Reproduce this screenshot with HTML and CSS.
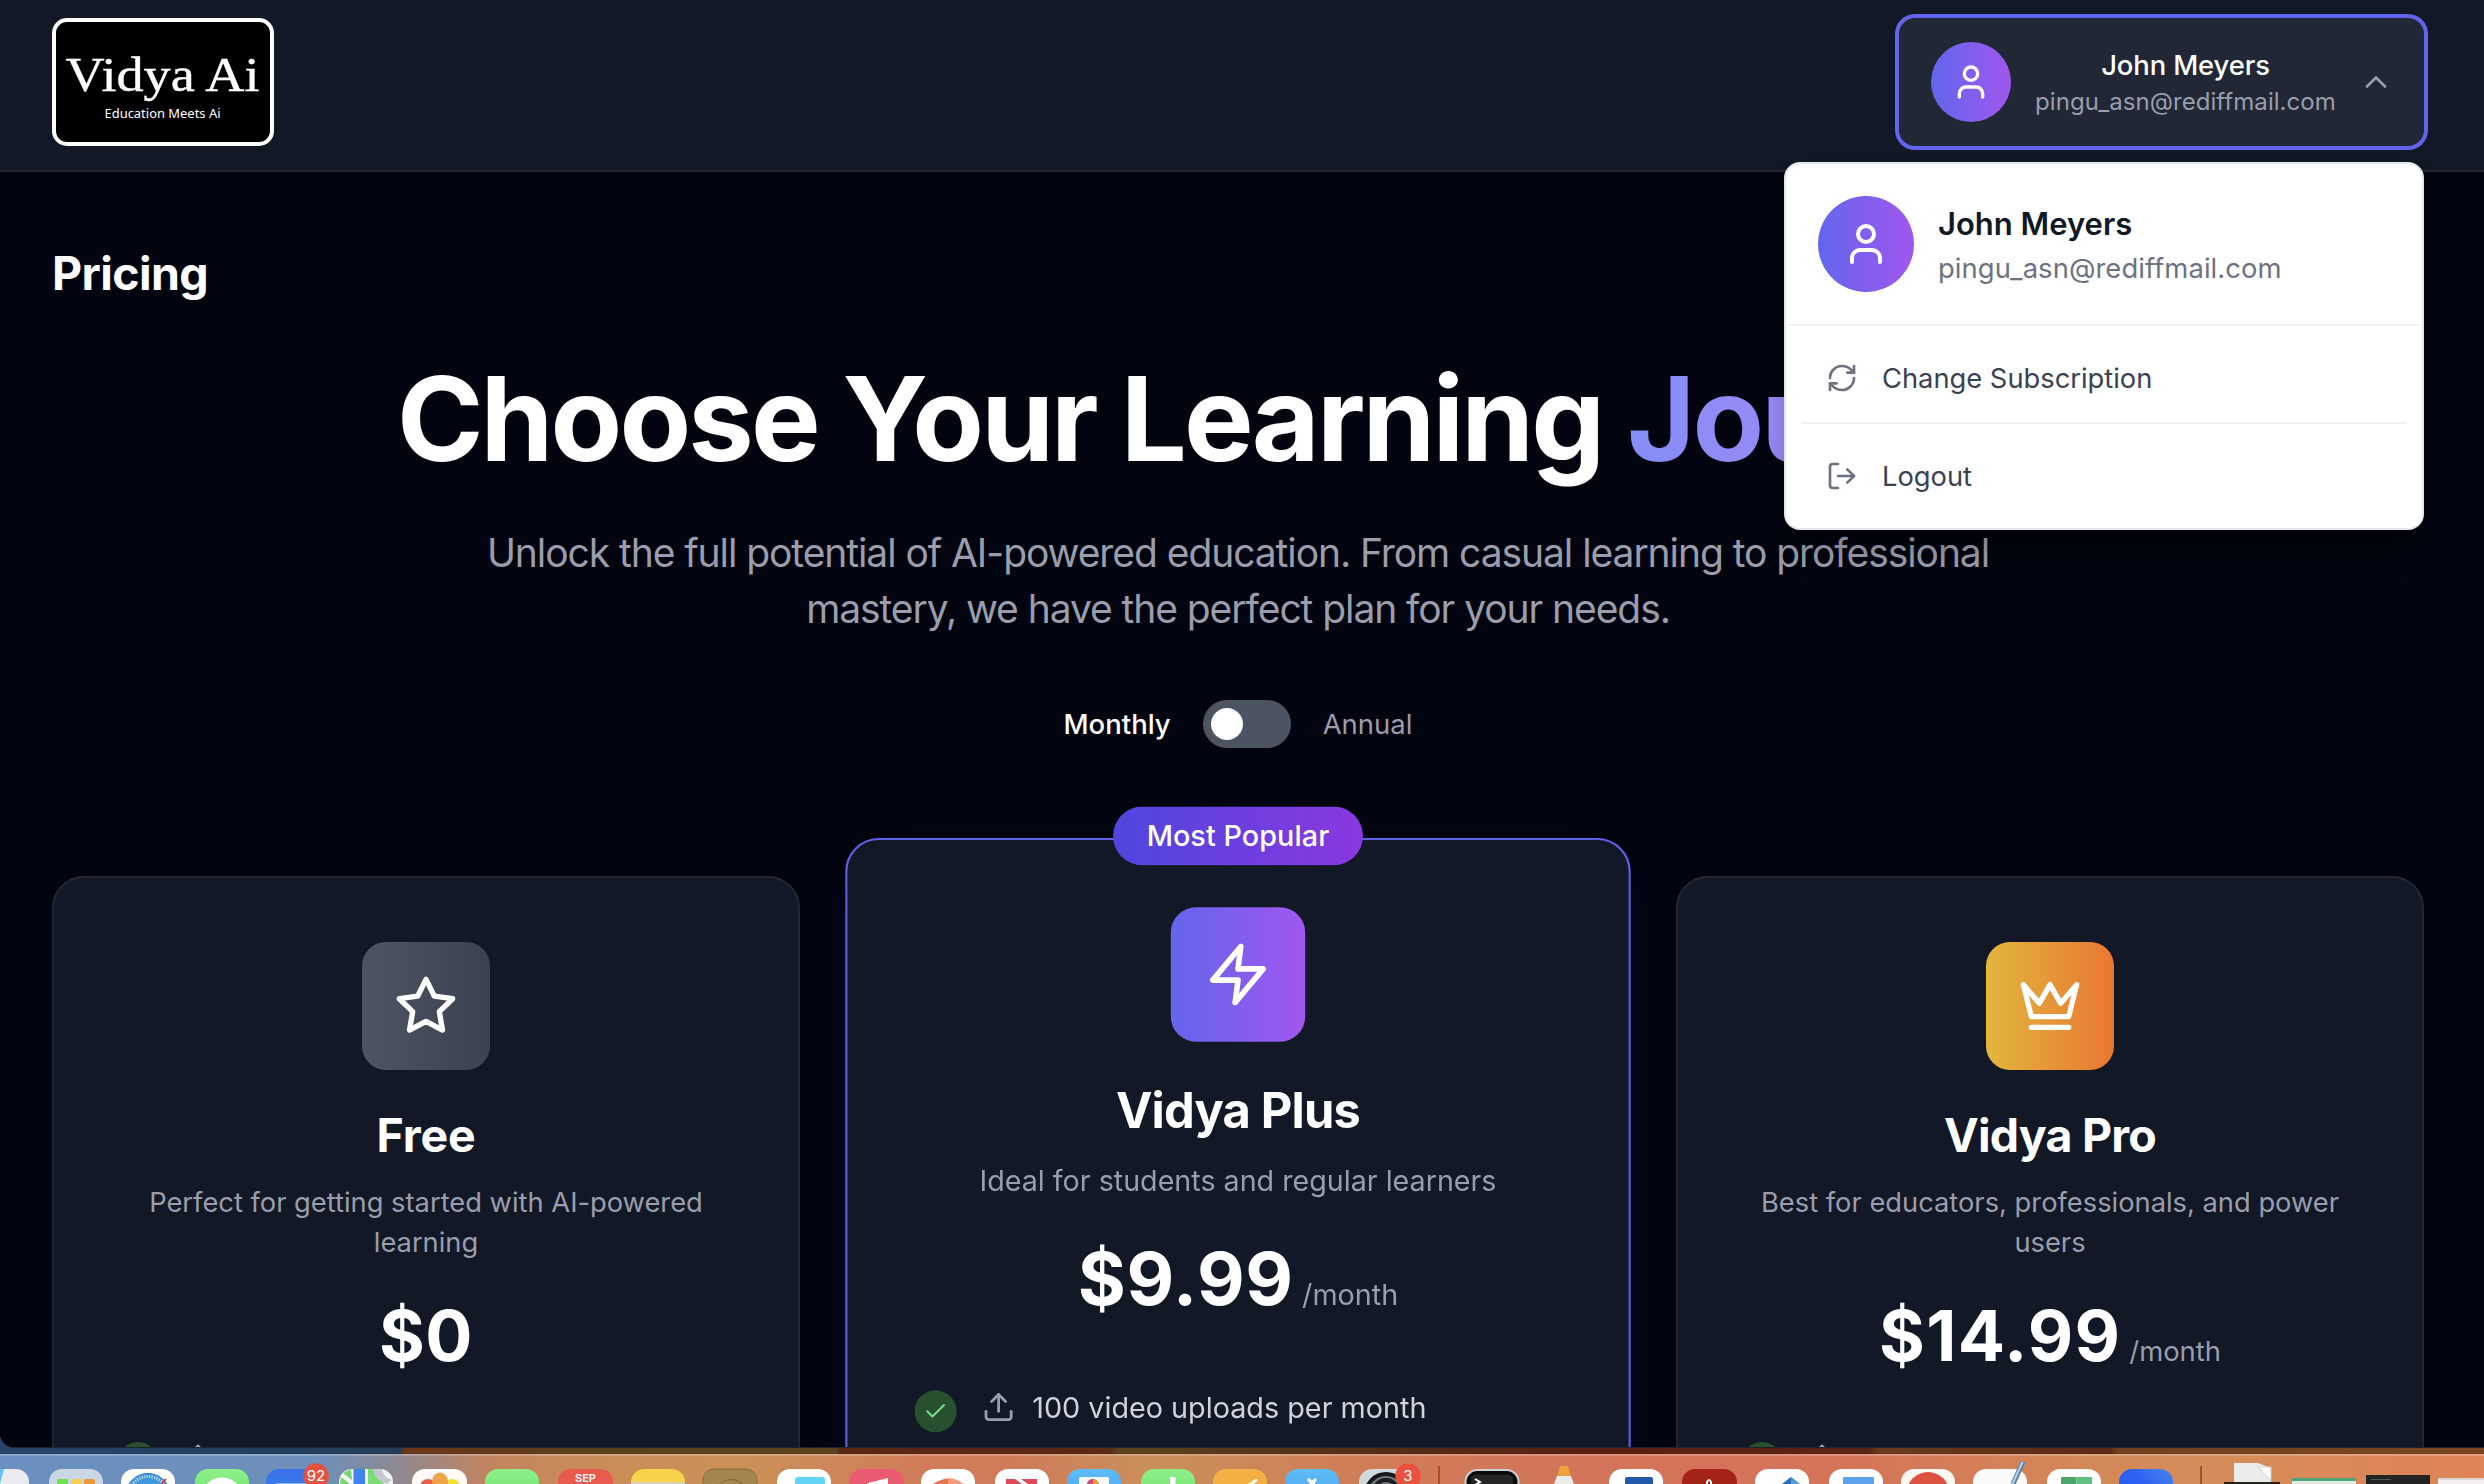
FILE: index.html
```
<!DOCTYPE html>
<html lang="en">
<head>
<meta charset="utf-8">
<title>Vidya Ai – Pricing</title>
<link rel="stylesheet" href="styles.css">
</head>
<body>
<div class="screen">
  <div class="window">
    <header class="topbar">
      <svg class="logo" viewBox="0 0 222 128" role="img" aria-label="Vidya Ai">
        <rect x="2" y="2" width="218" height="124" rx="13" fill="#000" stroke="#fff" stroke-width="4"/>
        <text class="logo-name" x="13.5" y="73" textLength="194" lengthAdjust="spacingAndGlyphs">Vidya Ai</text>
        <text class="logo-tag" x="52.5" y="99.5" textLength="116" lengthAdjust="spacingAndGlyphs">Education Meets Ai</text>
      </svg>
      <div class="account">
        <button class="user-button">
          <span class="avatar"><svg class="icon i40" viewBox="0 0 24 24"><path d="M19 21v-2a4 4 0 0 0-4-4H9a4 4 0 0 0-4 4v2"/><circle cx="12" cy="7" r="4"/></svg></span>
          <span class="user-text">
            <span class="user-name">John Meyers</span>
            <span class="user-mail">pingu_asn@rediffmail.com</span>
          </span>
          <svg class="icon chevron" viewBox="0 0 24 24"><path d="m18 15-6-6-6 6"/></svg>
        </button>
        <div class="menu">
          <div class="menu-profile">
            <span class="avatar avatar-lg"><svg class="icon i48" viewBox="0 0 24 24"><path d="M19 21v-2a4 4 0 0 0-4-4H9a4 4 0 0 0-4 4v2"/><circle cx="12" cy="7" r="4"/></svg></span>
            <div>
              <div class="menu-name">John Meyers</div>
              <div class="menu-mail">pingu_asn@rediffmail.com</div>
            </div>
          </div>
          <div class="menu-items">
            <div class="menu-item">
              <svg class="icon i32" viewBox="0 0 24 24"><path d="M3 12a9 9 0 0 1 9-9 9.75 9.75 0 0 1 6.74 2.74L21 8"/><path d="M21 3v5h-5"/><path d="M21 12a9 9 0 0 1-9 9 9.75 9.75 0 0 1-6.74-2.74L3 16"/><path d="M8 16H3v5"/></svg>
              <span>Change Subscription</span>
            </div>
            <div class="menu-rule"></div>
            <div class="menu-item">
              <svg class="icon i32" viewBox="0 0 24 24"><path d="M9 21H5a2 2 0 0 1-2-2V5a2 2 0 0 1 2-2h4"/><path d="m16 17 5-5-5-5"/><path d="M21 12H9"/></svg>
              <span>Logout</span>
            </div>
          </div>
        </div>
      </div>
    </header>

    <main class="page">
      <h2 class="page-title">Pricing</h2>
      <section class="hero">
        <h1 class="headline">Choose Your Learning <span class="headline-accent">Journey</span></h1>
        <p class="lead">Unlock the full potential of AI-powered education. From casual learning to professional<br>mastery, we have the perfect plan for your needs.</p>
        <div class="billing">
          <span class="billing-on">Monthly</span>
          <span class="switch"><span class="knob"></span></span>
          <span class="billing-off">Annual</span>
        </div>
      </section>

      <section class="plans">
        <article class="plan">
          <div class="plan-icon grey"><svg class="icon i64" viewBox="0 0 24 24"><polygon points="12 2 15.09 8.26 22 9.27 17 14.14 18.18 21.02 12 17.77 5.82 21.02 7 14.14 2 9.27 8.91 8.26 12 2"/></svg></div>
          <h3 class="plan-name plan-name-free">Free</h3>
          <p class="plan-desc">Perfect for getting started with AI-powered<br>learning</p>
          <div class="price"><span class="amount">$0</span></div>
          <div class="feature">
            <span class="check"><svg class="icon i24" viewBox="0 0 24 24"><path d="M20 6 9 17l-5-5"/></svg></span>
            <svg class="icon i32 upload" viewBox="0 0 24 24"><path d="M21 15v4a2 2 0 0 1-2 2H5a2 2 0 0 1-2-2v-4"/><path d="m17 8-5-5-5 5"/><path d="M12 3v12"/></svg>
            <span>10 video uploads per month</span>
          </div>
        </article>

        <article class="plan popular">
          <div class="badge">Most Popular</div>
          <div class="plan-icon violet"><svg class="icon i64" viewBox="0 0 24 24"><polygon points="13 2 3 14 12 14 11 22 21 10 12 10 13 2"/></svg></div>
          <h3 class="plan-name">Vidya Plus</h3>
          <p class="plan-desc">Ideal for students and regular learners</p>
          <div class="price"><span class="amount">$9.99</span><span class="per">/month</span></div>
          <div class="feature">
            <span class="check"><svg class="icon i24" viewBox="0 0 24 24"><path d="M20 6 9 17l-5-5"/></svg></span>
            <svg class="icon i32 upload" viewBox="0 0 24 24"><path d="M21 15v4a2 2 0 0 1-2 2H5a2 2 0 0 1-2-2v-4"/><path d="m17 8-5-5-5 5"/><path d="M12 3v12"/></svg>
            <span>100 video uploads per month</span>
          </div>
        </article>

        <article class="plan">
          <div class="plan-icon gold"><svg class="icon i64" viewBox="0 0 24 24"><path d="m2 4 3 12h14l3-12-6 7-4-7-4 7-6-7z"/><path d="M5 20h14"/></svg></div>
          <h3 class="plan-name">Vidya Pro</h3>
          <p class="plan-desc">Best for educators, professionals, and power<br>users</p>
          <div class="price"><span class="amount amount-pro">$14.99</span><span class="per">/month</span></div>
          <div class="feature">
            <span class="check"><svg class="icon i24" viewBox="0 0 24 24"><path d="M20 6 9 17l-5-5"/></svg></span>
            <svg class="icon i32 upload" viewBox="0 0 24 24"><path d="M21 15v4a2 2 0 0 1-2 2H5a2 2 0 0 1-2-2v-4"/><path d="m17 8-5-5-5 5"/><path d="M12 3v12"/></svg>
            <span>50 video uploads per month</span>
          </div>
        </article>
      </section>
    </main>
  </div>

  <div class="dock">
    <svg class="dock-art" viewBox="0 1456 2484 28" width="2484" height="28">
      <defs>
        <linearGradient id="green" x1="0" y1="0" x2="0" y2="1"><stop offset="0" stop-color="#8df08a"/><stop offset="1" stop-color="#5fd75c"/></linearGradient>
        <linearGradient id="mail" x1="0" y1="0" x2="0" y2="1"><stop offset="0" stop-color="#3a6fe8"/><stop offset="1" stop-color="#3f8bf5"/></linearGradient>
        <linearGradient id="sky" x1="0" y1="0" x2="0" y2="1"><stop offset="0" stop-color="#5fbdf8"/><stop offset="1" stop-color="#3f8fee"/></linearGradient>
        <linearGradient id="blue" x1="0" y1="1" x2="1" y2="0"><stop offset="0" stop-color="#2458f0"/><stop offset=".6" stop-color="#2b62f2"/><stop offset="1" stop-color="#4a86ee"/></linearGradient>
      </defs>
      <!-- Finder, Launchpad, Safari -->
      <rect x="-25" y="1469" width="54" height="54" rx="13" fill="#e9ebee"/><path d="M0 1469h4l-4 15z" fill="#5fc3f5"/>
      <rect x="49" y="1469" width="54" height="54" rx="13" fill="#cbd6e4"/>
      <rect x="57" y="1479" width="11" height="11" rx="2" fill="#6fe04e"/><rect x="71" y="1479" width="11" height="11" rx="2" fill="#f5cf4a"/><rect x="84" y="1479" width="11" height="11" rx="2" fill="#ea9a37"/>
      <rect x="121" y="1469" width="54" height="54" rx="13" fill="#fff"/><circle cx="148" cy="1496" r="22.500" fill="#3f97e0" stroke="#2b78b8"/><circle cx="148" cy="1496" r="19.500" fill="none" stroke="#d6ecfb" stroke-width="3" stroke-dasharray="1 1.500"/><path d="M166 1479l-5 5" stroke="#e0483c" stroke-width="2"/>
      <!-- Messages, Mail, Maps -->
      <rect x="195" y="1469" width="54" height="54" rx="13" fill="url(#green)"/><ellipse cx="222" cy="1492" rx="18" ry="14.500" fill="#fff"/>
      <rect x="266" y="1469" width="54" height="54" rx="13" fill="url(#mail)"/><path d="M276 1483h34v1h-34z" fill="#8fb4f7"/>
      <circle cx="316" cy="1476" r="12.800" fill="#e3513f"/><text class="dock-badge" x="316" y="1481">92</text>
      <rect x="339" y="1469" width="54" height="54" rx="13" fill="#f4f6f4"/><path d="M341 1477l9 7h-10zM351 1469l-8 4 9 7z" fill="#79d573"/><rect x="353.500" y="1469" width="11.500" height="15" fill="#3f83f1"/><path d="M368 1469h8l8 15h-16z" fill="#7ddc74"/><path d="M373 1469q2 12 14 15l5-4q-9-3-10-11z" fill="#c6c8d2"/>
      <!-- Photos, FaceTime, Calendar -->
      <rect x="412" y="1469" width="55" height="54" rx="13" fill="#fdfaf7"/><circle cx="428" cy="1487" r="8" fill="#e8604c"/><circle cx="452" cy="1487" r="8" fill="#f4e032"/><ellipse cx="440" cy="1482" rx="8" ry="9.500" fill="#f09b37" opacity=".92"/>
      <rect x="485" y="1469" width="54" height="54" rx="13" fill="url(#green)"/>
      <rect x="558" y="1469" width="55" height="54" rx="13" fill="#e8594e"/><text class="dock-month" x="585.500" y="1481.500">SEP</text>
      <!-- Notes, Contacts, Keynote -->
      <rect x="631" y="1469" width="54" height="54" rx="13" fill="#f7d34b"/><rect x="631" y="1482" width="54" height="2" fill="#d9d3bd"/>
      <rect x="703" y="1469" width="54" height="54" rx="11" fill="#a38550" stroke="#8a6d3b"/><circle cx="731" cy="1497" r="17.500" fill="none" stroke="#83683a"/>
      <rect x="777" y="1469" width="54" height="54" rx="13" fill="#fff"/><rect x="795" y="1477" width="30" height="14" rx="3" fill="#63d3f7"/>
      <!-- Music, PowerPoint, News -->
      <rect x="849" y="1469" width="55" height="54" rx="13" fill="#ea5a70"/><path d="M868 1483l20-5v6h-20z" fill="#fff"/>
      <rect x="921" y="1469" width="54" height="54" rx="13" fill="#fff"/><path d="M933 1484q17-11 30 0z" fill="#e8744f"/><path d="M948 1478.500q9 0 15 5.500h-15z" fill="#f39a78"/>
      <rect x="995" y="1469" width="54" height="54" rx="13" fill="#fff"/><path d="M1006 1479h9l7 5h-16zM1021 1479h16v5h-9z" fill="#e2485c"/>
      <!-- Keynote, Numbers, Pages -->
      <rect x="1067" y="1469" width="54" height="54" rx="13" fill="url(#sky)"/><rect x="1079" y="1477" width="30" height="12" rx="1.500" fill="#f4f8fc"/><circle cx="1093" cy="1485" r="6" fill="#5b74c9"/><path d="M1093 1485v-6a6 6 0 0 1 6 6z" fill="#f09b37"/><path d="M1093 1485v-6a6 6 0 0 0-6 6z" fill="#d8476b"/>
      <rect x="1141" y="1469" width="54" height="54" rx="13" fill="url(#green)"/><rect x="1170" y="1477" width="5.500" height="10" rx="1.500" fill="#fff"/>
      <rect x="1213" y="1469" width="54" height="54" rx="13" fill="#f4b044"/><path d="M1248 1484l6-4q4-2 4 0l-4 4z" fill="#fff"/>
      <!-- App Store, Settings -->
      <rect x="1285" y="1469" width="54" height="54" rx="13" fill="url(#sky)"/><path d="M1309 1480l5 5M1315 1480l-4 5" stroke="#fff" stroke-width="3.500" stroke-linecap="round"/>
      <rect x="1359" y="1469" width="54" height="54" rx="13" fill="#cfdadf"/><circle cx="1386" cy="1494" r="20" fill="#71797d" stroke="#16191a" stroke-width="4"/><circle cx="1386" cy="1492" r="12" fill="none" stroke="#1b1e20" stroke-width="4"/>
      <circle cx="1408" cy="1476" r="12.800" fill="#ea513f"/><text class="dock-badge" x="1408" y="1481">3</text>
      <rect x="1438" y="1466" width="2" height="18" fill="#a35427"/>
      <!-- Terminal, VLC, office apps -->
      <rect x="1465.500" y="1470" width="53" height="54" rx="12" fill="#0a0a0a" stroke="#c8d3d8" stroke-width="2"/><rect x="1471" y="1474.500" width="42" height="30" rx="5" fill="#262626"/><path d="M1475 1479l5 3-5 3" fill="none" stroke="#fff" stroke-width="2"/>
      <path d="M1560 1466h8l3 11h-14z" fill="#eea23c"/><path d="M1557 1476h14l3 8h-20z" fill="#ecebea"/>
      <rect x="1609" y="1469" width="54" height="54" rx="13" fill="#fff"/><rect x="1625" y="1477" width="28" height="12" rx="2" fill="#225aa8"/>
      <rect x="1682" y="1469" width="55" height="54" rx="13" fill="#a42417"/><path d="M1707 1485v-3q2-4 4 0v3" fill="none" stroke="#fff" stroke-width="2"/>
      <rect x="1755" y="1469" width="54" height="54" rx="13" fill="#fff"/><path d="M1782 1484l9-7 9 7z" fill="#276bbd"/><path d="M1791 1477v7h9z" fill="#5a9be0"/>
      <rect x="1829" y="1469" width="54" height="54" rx="13" fill="#fff"/><rect x="1843" y="1477" width="31" height="12" rx="1" fill="#5ca2ea"/>
      <rect x="1901" y="1469" width="54" height="54" rx="13" fill="#fdf7f4"/><circle cx="1928" cy="1493.500" r="21.500" fill="#dd5341"/>
      <rect x="1973" y="1469" width="54" height="54" rx="13" fill="#fafafa"/><path d="M2023 1462l-10 22" stroke="#5d7f9e" stroke-width="5"/><path d="M2022.500 1462l-10 22" stroke="#b5d5ee" stroke-width="2"/>
      <rect x="2047" y="1469" width="54" height="54" rx="13" fill="#fff"/><rect x="2061" y="1477" width="15.500" height="8" fill="#4ca56a"/><rect x="2076.500" y="1477" width="15.500" height="8" fill="#5fc283"/>
      <rect x="2119" y="1469" width="54" height="54" rx="13" fill="url(#blue)"/>
      <rect x="2200" y="1466" width="2" height="18" fill="#a35427"/>
      <!-- Documents stack and minimised windows -->
      <path d="M2234 1463h24l13 5v15h-37z" fill="#ececec"/><path d="M2258 1467h13v14z" fill="#fff" stroke="#cfcfcf"/><path d="M2224 1482h56v2h-56z" fill="#26231f"/>
      <rect x="2292" y="1478" width="64" height="10" fill="#dfe9e3"/><rect x="2292" y="1478" width="64" height="3" fill="#4da67a"/>
      <rect x="2366" y="1475" width="64" height="10" fill="#222325"/><rect x="2371" y="1479" width="20" height="1" fill="#4d5a4a"/>
      <rect x="2438" y="1478" width="46" height="10" fill="#f2eeee"/><rect x="2438" y="1478" width="46" height="2" fill="#dcd6d6"/>
    </svg>
  </div>
</div>
</body>
</html>
```
FILE: styles.css
```
* { box-sizing: border-box; }

body {
  margin: 0;
  font-family: Inter, "Liberation Sans", sans-serif;
  color: #fff;
  overflow: hidden;
}

h1, h2, h3, p { margin: 0; }

.screen {
  width: 2484px;
  height: 1484px;
  display: flex;
  flex-direction: column;
  overflow: hidden;
  background: linear-gradient(90deg, #27456a 0, #233c58 400px, #6a3618 404px, #58401c 600px, #5b441f 836px, #5a2614 840px, #5b2915 1110px, #5c431f 1118px, #53331a 1300px, #591f13 1600px, #5a2416 1868px, #6b3c1c 1880px, #5a2816 2110px, #6f431f 2118px, #7a4422 2484px);
}

.window {
  height: 1448px;
  flex: none;
  overflow: hidden;
  border-radius: 0 0 0 14px;
  border-bottom: 1px solid #1d222d;
  background: #02040f;
}

/* Top bar */
.topbar {
  height: 172px;
  padding: 0 60px 8px 52px;
  display: flex;
  justify-content: space-between;
  align-items: center;
  background: #121826;
  border-bottom: 2px solid #202633;
}

.logo { width: 222px; height: 128px; display: block; margin-top: 1px; }
.logo-name { font: 49px "Liberation Serif", serif; fill: #fff; stroke: #fff; stroke-width: .4px; }
.logo-tag { font: 13px "Noto Sans", sans-serif; fill: #fff; }

.account { position: relative; margin-top: 1px; }

.user-button {
  width: 525px;
  height: 128px;
  padding: 0 32px;
  display: flex;
  align-items: center;
  gap: 24px;
  border: 0;
  border-radius: 16px;
  background: #212735;
  box-shadow: 0 0 0 4px #6264ea;
  color: #fff;
  font-family: inherit;
}

.avatar {
  width: 80px;
  height: 80px;
  flex: none;
  display: flex;
  align-items: center;
  justify-content: center;
  border-radius: 50%;
  color: #fff;
  background: linear-gradient(90deg, #6366ec, #a057ee);
}
.avatar-lg { width: 96px; height: 96px; }

.user-text { width: 301px; flex: none; display: flex; flex-direction: column; text-align: center; white-space: nowrap; }
.user-name { font-size: 27.4px; line-height: 40px; font-weight: 500; letter-spacing: -.1px; }
.user-mail { padding-top: 1px; font-size: 24px; line-height: 32px; letter-spacing: .06px; color: #9a9dab; }

.icon { flex: none; display: block; fill: none; stroke: currentColor; stroke-width: 2; stroke-linecap: round; stroke-linejoin: round; }
.i24 { width: 24px; height: 24px; }
.i32 { width: 32px; height: 32px; }
.i40 { width: 40px; height: 40px; }
.i48 { width: 48px; height: 48px; }
.i64 { width: 64px; height: 64px; }
.chevron { width: 36px; height: 36px; margin: 0 -2px; color: #9a9dab; stroke-width: 1.8; }

/* Account menu, floating above the page */
.menu {
  position: absolute;
  top: 144px;
  right: 0;
  z-index: 5;
  width: 640px;
  height: 368px;
  border: 2px solid #e5e7eb;
  border-radius: 16px;
  background: #fff;
  box-shadow: 0 20px 30px rgba(0, 0, 0, .2);
}
.menu-profile { height: 162px; padding: 0 32px; display: flex; align-items: center; gap: 24px; border-bottom: 2px solid #f1f2f4; }
.menu-name { padding-top: 1px; font-size: 31px; line-height: 48px; font-weight: 600; color: #121826; }
.menu-mail { font-size: 27.4px; line-height: 40px; letter-spacing: .08px; color: #6e7280; }
.menu-items { padding: 16px; }
.menu-item { height: 72px; padding: 1px 24px 0; display: flex; align-items: center; gap: 24px; font-size: 27.3px; color: #3a4252; }
.menu-item .icon { color: #6e7280; }
.menu-rule { height: 2px; margin: 8px 0 16px; background: #f1f2f4; }

/* Page */
.page { padding: 69px 60px 0 52px; }
.page-title { font-size: 46.5px; line-height: 64px; letter-spacing: -.6px; font-weight: 700; }

.hero { display: flex; flex-direction: column; align-items: center; }
.headline { margin-top: 54px; font-size: 117px; line-height: 120px; font-weight: 700; letter-spacing: -2.9px; white-space: nowrap; }
.headline-accent { color: transparent; background: linear-gradient(90deg, #858df6, #b985f5); -webkit-background-clip: text; background-clip: text; }
.lead { margin-top: 46px; font-size: 39px; line-height: 56px; letter-spacing: -1.07px; text-align: center; color: #9a9dab; }

.billing { margin-top: 63px; height: 48px; display: flex; align-items: center; gap: 32px; font-size: 27.5px; }
.billing-on { font-weight: 500; }
.billing-off { color: #9a9dab; }
.switch { width: 88px; height: 48px; padding: 8px; border-radius: 24px; background: #4c5361; }
.knob { display: block; width: 32px; height: 32px; border-radius: 50%; background: #fff; }

/* Plans */
.plans { margin-top: 128px; display: grid; grid-template-columns: repeat(3, 748px); gap: 64px; }
.plan {
  position: relative;
  height: 1520px;
  padding: 64px;
  display: flex;
  flex-direction: column;
  align-items: center;
  border: 2px solid #202735;
  border-radius: 32px;
  background: #121826;
}
.popular { transform: scale(1.05); border-color: #5f61e4; box-shadow: 0 30px 50px -6px rgba(99, 102, 241, .1); }

.badge {
  position: absolute;
  top: -32px;
  left: 50%;
  transform: translateX(-50%);
  padding: 8px 32px;
  border-radius: 28px;
  font-size: 27.4px;
  line-height: 40px;
  font-weight: 500;
  letter-spacing: .06px;
  white-space: nowrap;
  background: linear-gradient(90deg, #4f46de, #8a38df);
}

.plan-icon { width: 128px; height: 128px; flex: none; display: flex; align-items: center; justify-content: center; border-radius: 24px; }
.grey { background: linear-gradient(90deg, #4e5462, #3a4150); }
.violet { background: linear-gradient(90deg, #6366ec, #a057ee); }
.gold { background: linear-gradient(90deg, #e2b63e, #e97632); }

.plan-name { margin-top: 33px; font-size: 46.5px; line-height: 64px; font-weight: 700; letter-spacing: -.8px; }
.plan-name-free { letter-spacing: -.2px; }
.plan-desc { margin-top: 16px; font-size: 27.3px; line-height: 40px; text-align: center; color: #9a9dab; white-space: nowrap; }
.price { margin-top: 33px; height: 78px; line-height: 80px; }
.amount { font-size: 70px; font-weight: 700; letter-spacing: .6px; }
.amount-pro { letter-spacing: 1.3px; }
.per { margin-left: 8px; font-size: 27.4px; color: #9a9dab; }

.feature { width: 100%; margin-top: 64px; display: flex; align-items: flex-start; font-size: 27.4px; line-height: 40px; color: #d0d3da; }
.check { width: 40px; height: 40px; margin: 4px 24px 0 0; display: flex; align-items: center; justify-content: center; border-radius: 50%; background: #28502f; color: #74dc8a; }
.upload { margin: 4px 16px 0 0; color: #9a9dab; }

/* Dock */
.dock {
  flex: none;
  height: 30px;
  margin-top: 6px;
  border-top: 2px solid rgba(255, 255, 255, .22);
  background: linear-gradient(90deg, #6b8fc0 0, #6d8fb9 320px, #8f8890 400px, #c4835f 490px, #c98c58 600px, #ca9157 740px, #d07b59 930px, #cf7b5a 1010px, #c98f59 1150px, #cf8058 1320px, #d17759 1480px, #d4735a 1700px, #d47459 1850px, #d38857 2080px, #d48c59 2200px, #df8456 2484px);
}
.dock-art { display: block; }
.dock-badge { font: 15px Inter, sans-serif; fill: #fff; text-anchor: middle; }
.dock-month { font: 600 11px Inter, sans-serif; fill: #fff; text-anchor: middle; }
```
